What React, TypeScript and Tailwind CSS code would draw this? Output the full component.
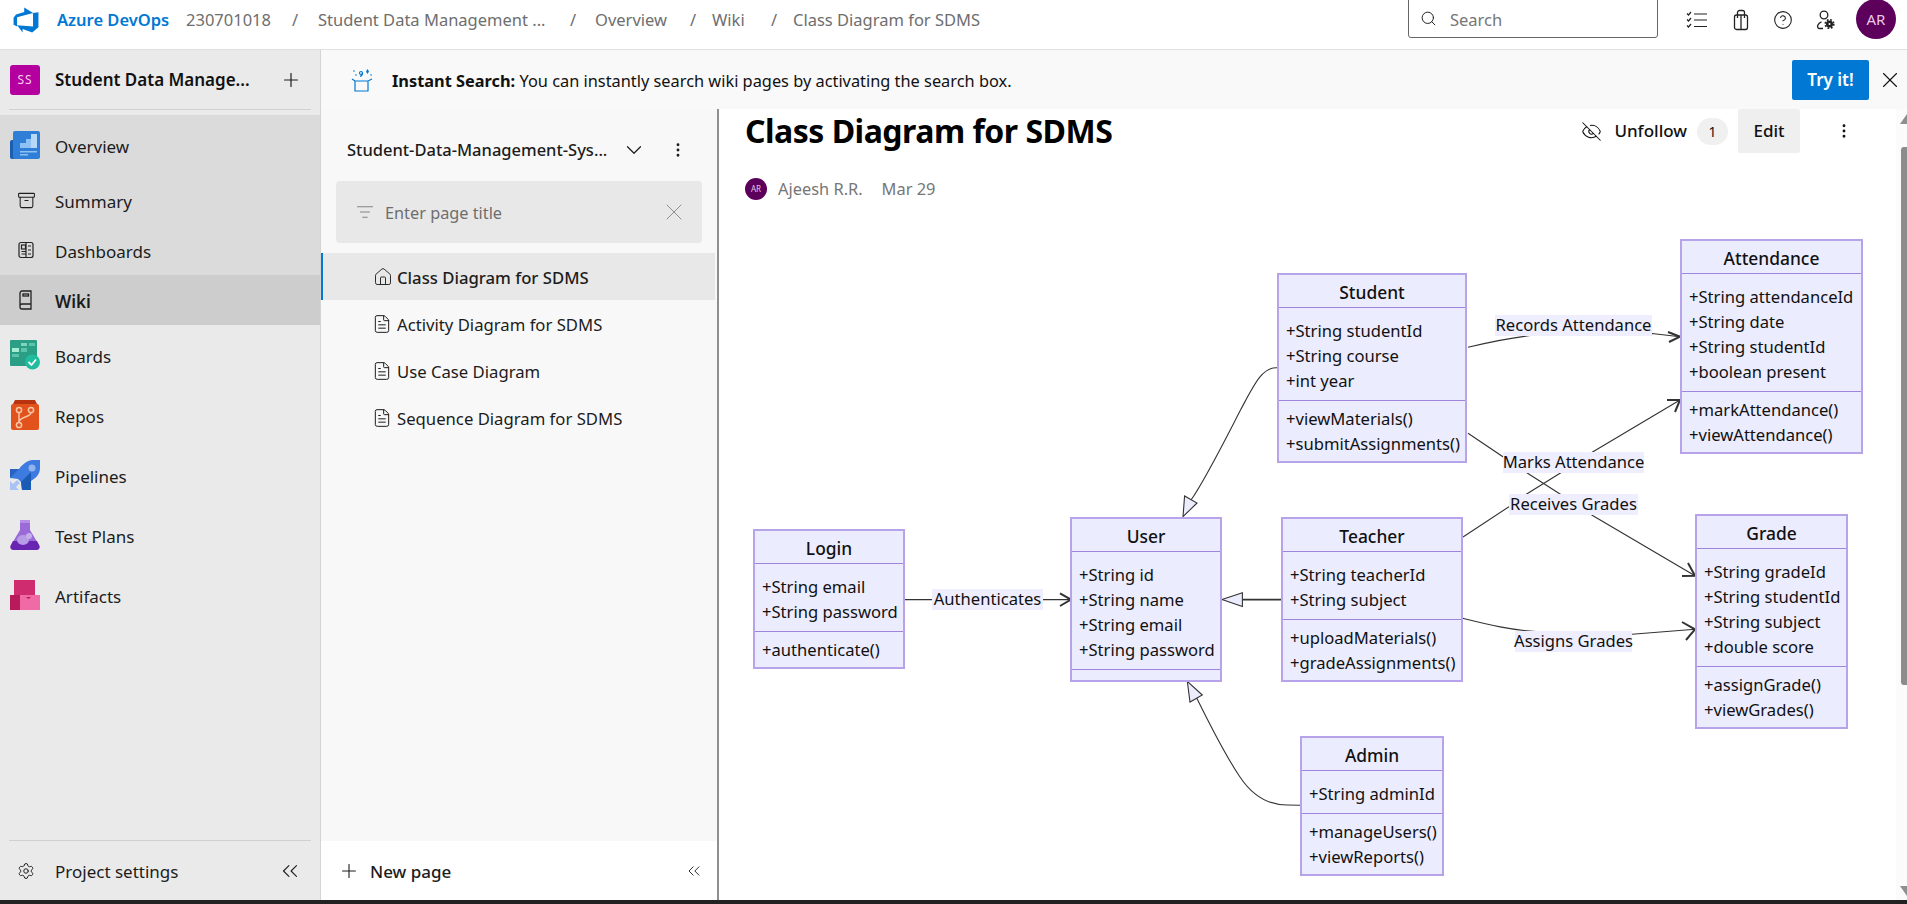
import { ChevronDown, ChevronsLeft, EllipsisVertical, FileText, House, ListFilter, Plus, Search, Settings, X, Archive, EyeOff, CircleHelp } from 'lucide-react';

function AzureLogo() {
  return (
    <svg width="28" height="28" viewBox="0 0 18 18" className="ml-[12px] shrink-0">
      <path fill="#0078d4" d="M17 4v9.74l-4 3.28-6.2-2.26V17l-3.51-4.59 10.23.8V4.44zm-3.41.49L7.85 1v2.9L2.58 5.45 1 7.49v4.63l2.26 1V7.18z" />
    </svg>
  );
}

function OverviewIcon() {
  return (
    <svg width="30" height="28" viewBox="0 0 30 28">
      <rect x="0" y="9" width="10" height="19" rx="2" fill="#1c5fb0" />
      <rect x="3" y="0" width="27" height="28" rx="2" fill="#2f7fd9" />
      <path d="M10 17v-5h6V8h5V3h6v14z" fill="#8fc2f2" />
      <path d="M21 3h6v14h-6z" fill="#b7d9f7" />
      <rect x="10" y="20" width="17" height="1.5" fill="#8fc2f2" />
      <rect x="10" y="23" width="8" height="1.5" fill="#8fc2f2" />
    </svg>
  );
}

function BoardsIcon() {
  return (
    <svg width="30" height="30" viewBox="0 0 30 30">
      <rect x="0" y="0" width="27" height="26" rx="1" fill="#2b9f86" />
      <rect x="2" y="8" width="7" height="4" fill="#a6ecd4" />
      <rect x="11" y="8" width="6" height="4" fill="#5cc4aa" />
      <rect x="19" y="3" width="6" height="3" fill="#5cc4aa" />
      <rect x="11" y="3" width="6" height="3" fill="#7fd4bd" />
      <rect x="2" y="14" width="7" height="3" fill="#5cc4aa" />
      <circle cx="22.5" cy="22" r="7.5" fill="#1fbd9e" />
      <path d="M18.5 22l3 3 4.5-5.5" fill="none" stroke="#fff" strokeWidth="1.8" />
    </svg>
  );
}

function ReposIcon() {
  return (
    <svg width="28" height="30" viewBox="0 0 28 30">
      <path d="M4 0h20l2 4H2z" fill="#b9340e" />
      <rect x="0" y="4" width="28" height="26" rx="2" fill="#e2521d" />
      <g fill="none" stroke="#f7c6a4" strokeWidth="1.5">
        <circle cx="8" cy="10" r="2.6" />
        <circle cx="20" cy="10" r="2.6" />
        <circle cx="8" cy="25" r="2.6" />
        <path d="M8 12.6v9.8M20 12.6c0 5-12 4-12 9.8" />
      </g>
    </svg>
  );
}

function PipelinesIcon() {
  return (
    <svg width="30" height="30" viewBox="0 0 30 30">
      <path d="M22 0h8v8c0 6-4 10-9 13v9h-9l-1-8-3-3-8-1V9h9C12 5 16 1 22 0z" fill="#3e7be0" />
      <path d="M21 21v9h-9l-1-8 10-10z" fill="#1a5cb5" />
      <path d="M0 9h9L0 18z" fill="#2a62c4" />
      <circle cx="22" cy="8" r="3.5" fill="#8fb4f0" />
      <path d="M0 30v-9l3 3 4-4 3 3-4 4 3 3z" fill="#a9c4f2" />
    </svg>
  );
}

function TestPlansIcon() {
  return (
    <svg width="30" height="30" viewBox="0 0 30 30">
      <path d="M10 0h10v10l9 15c1.500 2.500 0 5-3 5H4c-3 0-4.500-2.500-3-5l9-15z" fill="#9a6bd8" />
      <rect x="10" y="0" width="10" height="3" fill="#b48ee4" />
      <path d="M3 21h24l2 4c1.500 2.500 0 5-3 5H4c-3 0-4.500-2.500-3-5z" fill="#6a24b2" />
      <ellipse cx="13" cy="20" rx="6" ry="5" fill="#b79be6" />
      <circle cx="19" cy="16" r="3" fill="#c5aeeb" />
    </svg>
  );
}

function ArtifactsIcon() {
  return (
    <svg width="30" height="30" viewBox="0 0 30 30">
      <rect x="4" y="0" width="21" height="16" fill="#cf2c6f" />
      <rect x="0" y="15" width="12" height="15" fill="#b81a5a" />
      <rect x="10" y="15" width="20" height="15" fill="#f06ba5" />
      <path d="M16 17h5l-2.500 2z" fill="#b81a5a" />
    </svg>
  );
}

function DashboardIcon() {
  return (
    <svg width="18" height="18" viewBox="0 0 18 18" fill="none" stroke="#222" strokeWidth="1.2">
      <rect x="2" y="1.500" width="14" height="15" rx="2" />
      <rect x="4.500" y="4" width="4" height="4" />
      <path d="M4.500 10.500h4M4.500 13h4M9 1.500v15M11 5h3M11 9h3M11 13h3" />
    </svg>
  );
}

function WikiIcon() {
  return (
    <svg width="18" height="22" viewBox="0 0 18 22" fill="none" stroke="#222" strokeWidth="1.3">
      <path d="M3 18V4a2 2 0 0 1 2-2h9v18H5a2 2 0 0 1-2-2zM3 17a2 2 0 0 1 2-2h9" />
      <rect x="6" y="5" width="5.500" height="2" />
    </svg>
  );
}

function ChecklistIcon() {
  return (
    <svg width="22" height="18" viewBox="0 0 22 18" fill="none" stroke="#222" strokeWidth="1.200">
      <path d="M1 2.500l1.500 1.500L5 1M1 8.500l1.500 1.500L5 7M1 14.500l1.500 1.500L5 13" />
      <path d="M8 3h13M8 9h13M8 15.500h13" />
    </svg>
  );
}

function BagIcon() {
  return (
    <svg width="16" height="22" viewBox="0 0 16 22" fill="none" stroke="#222" strokeWidth="1.3">
      <rect x="1.500" y="6" width="13" height="14.500" rx="2" />
      <path d="M4.500 9V3.500a2 2 0 0 1 2-2h3a2 2 0 0 1 2 2V9M8 6v14" />
    </svg>
  );
}

function PersonGearIcon() {
  return (
    <svg width="19" height="20" viewBox="0 0 19 20" fill="none" stroke="#222" strokeWidth="1.300">
      <circle cx="8" cy="5" r="3.800" />
      <path d="M7 18.500H3.500c-1.500 0-2.300-1.500-1.800-3 .7-2 2-3.200 3.800-3.700" />
      <circle cx="13.500" cy="14" r="2.800" fill="#222" stroke="#222" strokeWidth="1.500" />
      <circle cx="13.500" cy="14" r="4.300" stroke="#222" strokeWidth="1.600" strokeDasharray="1.800 1.600" />
      <circle cx="13.500" cy="14" r="1" fill="#fff" stroke="none" />
    </svg>
  );
}

function InstantSearchIcon() {
  return (
    <svg width="22" height="24" viewBox="0 0 22 24" fill="none" stroke="#0078d4" strokeWidth="1.200">
      <path d="M4 13v10h13V13M1 11l3 2h13l4-2" />
      <circle cx="10" cy="5" r="1.500" />
      <path d="M11.500 5c0 2-1 3-2.500 3.500" />
      <path d="M16.500 1l1.500 2.500-1.500 2.500-1.500-2.500z" fill="#0078d4" stroke="none" />
      <circle cx="3" cy="3" r="0.800" fill="#0078d4" stroke="none" />
      <circle cx="5" cy="7" r="0.800" fill="#0078d4" stroke="none" />
      <circle cx="20" cy="7" r="0.800" fill="#0078d4" stroke="none" />
    </svg>
  );
}

const groupedNav = [
  { label: 'Overview', icon: <OverviewIcon />, row: 'h-[60px] pl-[10px]', gap: 'ml-[15px]' },
  { label: 'Summary', icon: <Archive size={19} strokeWidth={1.3} />, row: 'h-[50px] pl-[17px]', gap: 'ml-[19px]' },
  { label: 'Dashboards', icon: <DashboardIcon />, row: 'h-[50px] pl-[17px]', gap: 'ml-[20px]' },
  { label: 'Wiki', icon: <WikiIcon />, row: 'h-[50px] pl-[17px] bg-[#cdcdcd] font-semibold', gap: 'ml-[20px]' },
];

const otherNav = [
  { label: 'Boards', icon: <BoardsIcon />, row: 'pl-[10px]', gap: 'ml-[15px]' },
  { label: 'Repos', icon: <ReposIcon />, row: 'pl-[11px]', gap: 'ml-[16px]' },
  { label: 'Pipelines', icon: <PipelinesIcon />, row: 'pl-[10px]', gap: 'ml-[15px]' },
  { label: 'Test Plans', icon: <TestPlansIcon />, row: 'pl-[10px]', gap: 'ml-[15px]' },
  { label: 'Artifacts', icon: <ArtifactsIcon />, row: 'pl-[10px]', gap: 'ml-[15px]' },
];

function Sidebar() {
  return (
    <aside className="w-[321px] shrink-0 flex flex-col bg-[#eaeaea] border-r border-[#d4d4d4] text-[17px] text-[#1c1c1c]">
      <div className="h-[59px] flex items-center pl-[10px]">
        <div className="w-[30px] h-[30px] rounded-[3px] bg-[#b4009e] flex items-center justify-center text-[12px] tracking-[1px] text-[#f5d0ee]">SS</div>
        <span className="ml-[15px] w-[200px] whitespace-nowrap text-[17px] font-semibold text-[#111]">Student Data Manage...</span>
        <Plus size={22} strokeWidth={1.3} className="ml-[25px]" />
      </div>
      <div className="h-px mx-[9px] bg-[#d0d0d0]" />
      <div className="h-[5px]" />
      <nav className="bg-[#dbdbdb]">
        {groupedNav.map((item) => (
          <div key={item.label} className={`flex items-center ${item.row}`}>
            {item.icon}
            <span className={`${item.gap} pt-[4px]`}>{item.label}</span>
          </div>
        ))}
      </nav>
      <nav>
        {otherNav.map((item) => (
          <div key={item.label} className={`flex items-center h-[60px] ${item.row}`}>
            {item.icon}
            <span className={`${item.gap} pt-[4px]`}>{item.label}</span>
          </div>
        ))}
      </nav>
      <div className="mt-auto h-px mx-[9px] bg-[#d0d0d0]" />
      <div className="h-[59px] flex items-center pl-[17px] pr-[17px]">
        <Settings size={18} strokeWidth={1.3} />
        <span className="ml-[20px] pt-[2px]">Project settings</span>
        <ChevronsLeft size={26} strokeWidth={1} className="ml-auto" />
      </div>
    </aside>
  );
}

const pages = [
  { title: 'Activity Diagram for SDMS' },
  { title: 'Use Case Diagram' },
  { title: 'Sequence Diagram for SDMS' },
];

function WikiTree() {
  return (
    <div className="w-[398px] shrink-0 flex flex-col bg-[#f8f8f8] border-r-2 border-[#8f8f8f] text-[16.7px] text-[#1c1c1c]">
      <div className="h-[72px] pt-[10px] flex items-center pl-[26px]">
        <span className="w-[270px] whitespace-nowrap font-medium text-[16.5px]">Student-Data-Management-Sys...</span>
        <ChevronDown size={26} strokeWidth={1.1} className="ml-[4px]" />
        <EllipsisVertical size={18} strokeWidth={1.8} className="ml-[22px]" />
      </div>
      <div className="mx-[15px] h-[62px] w-[366px] rounded-[4px] bg-[#e8e8e8] flex items-center pl-[20px] pr-[14px] text-[#6e6e6e] text-[16.3px]">
        <ListFilter size={18} strokeWidth={1.1} />
        <span className="ml-[11px] pt-[2px]">Enter page title</span>
        <X size={28} strokeWidth={0.8} className="ml-auto text-[#888]" />
      </div>
      <div className="mt-[10px] h-[47px] mr-[2px] flex items-center pl-[50px] bg-[#e8e8e8] border-l-2 border-[#0078d4] font-medium">
        <House size={20} strokeWidth={1.1} />
        <span className="ml-[4px] pt-[2px]">Class Diagram for SDMS</span>
      </div>
      {pages.map((page) => (
        <div key={page.title} className="h-[47px] flex items-center pl-[51px]">
          <FileText size={20} strokeWidth={1.2} />
          <span className="ml-[5px] pt-[2px]">{page.title}</span>
        </div>
      ))}
      <div className="mt-auto h-[59px] bg-white flex items-center pl-[17px] pr-[13px]">
        <Plus size={22} strokeWidth={1.2} />
        <span className="ml-[10px] pt-[2px] font-medium text-[17px]">New page</span>
        <ChevronsLeft size={20} strokeWidth={1.1} className="ml-auto" />
      </div>
    </div>
  );
}

const umlClasses = [
  { name: 'Login', pos: 'left-[34px] top-[319px] w-[152px]', attrs: ['+String email', '+String password'], methods: ['+authenticate()'] },
  { name: 'User', pos: 'left-[351px] top-[307px] w-[152px]', attrs: ['+String id', '+String name', '+String email', '+String password'], methods: [] },
  { name: 'Student', pos: 'left-[558px] top-[63px] w-[190px]', attrs: ['+String studentId', '+String course', '+int year'], methods: ['+viewMaterials()', '+submitAssignments()'] },
  { name: 'Attendance', pos: 'left-[961px] top-[29px] w-[183px]', attrs: ['+String attendanceId', '+String date', '+String studentId', '+boolean present'], methods: ['+markAttendance()', '+viewAttendance()'] },
  { name: 'Teacher', pos: 'left-[562px] top-[307px] w-[182px]', attrs: ['+String teacherId', '+String subject'], methods: ['+uploadMaterials()', '+gradeAssignments()'] },
  { name: 'Grade', pos: 'left-[976px] top-[304px] w-[153px]', attrs: ['+String gradeId', '+String studentId', '+String subject', '+double score'], methods: ['+assignGrade()', '+viewGrades()'] },
  { name: 'Admin', pos: 'left-[581px] top-[526px] w-[144px]', attrs: ['+String adminId'], methods: ['+manageUsers()', '+viewReports()'] },
];

const edgeLabels = [
  { text: 'Authenticates', pos: 'left-[213px] top-[379px] w-[111px]' },
  { text: 'Records Attendance', pos: 'left-[776px] top-[105px] w-[157px]' },
  { text: 'Marks Attendance', pos: 'left-[784px] top-[242px] w-[141px]' },
  { text: 'Receives Grades', pos: 'left-[790px] top-[284px] w-[129px]' },
  { text: 'Assigns Grades', pos: 'left-[796px] top-[421px] w-[117px]' },
];

function UmlBox({ name, pos, attrs, methods }: { name: string; pos: string; attrs: string[]; methods: string[] }) {
  return (
    <div className={`absolute ${pos} bg-[#ececff] border-2 border-[#b7a3ea] text-[16.6px] leading-[25px] text-[#111]`}>
      <div className="h-[32px] pt-[3px] flex items-center justify-center font-medium text-[17.4px]">{name}</div>
      <div className="border-t border-[#9f85de] pl-[7px] pt-[10px] pb-[7px] whitespace-nowrap">
        {attrs.map((a) => <div key={a}>{a}</div>)}
      </div>
      <div className="border-t border-[#9f85de] pl-[7px] pt-[5px] pb-[5px] whitespace-nowrap">
        {methods.map((m) => <div key={m}>{m}</div>)}
      </div>
    </div>
  );
}

function ClassDiagram() {
  return (
    <div className="relative h-[690px]">
      <svg className="absolute left-0 top-0" width="1177" height="690" viewBox="719 210 1177 690" fill="none" stroke="#333" strokeWidth="1.1">
        <path d="M905 599.6H1071" />
        <path d="M1060 593.300L1071 599.600L1060 606" strokeWidth="2" />
        <path d="M1277 367.700C1262 367 1254 385 1240.500 410C1225 440 1205 480 1191 500" />
        <path d="M1183 516.700L1184.600 496L1197 503Z" fill="#ececff" />
        <path d="M1281.800 599.600H1242.400" strokeWidth="1.600" />
        <path d="M1222 599.600L1242.400 592.700V606.500Z" fill="#ececff" />
        <path d="M1300 805.300L1287 805C1265 805 1250 792 1240 777C1225 755 1210 725 1196.700 698" />
        <path d="M1187.300 681.300L1190 702L1202.300 695Z" fill="#ececff" />
        <path d="M1468 347.300C1490 342 1515 337 1536 335L1652 333.500L1680 336.700" />
        <path d="M1668 332L1680 336.700L1669 342" strokeWidth="2" />
        <path d="M1468 433.300L1527.600 473.300L1560 494L1593 515.700L1695 575.700" />
        <path d="M1682 576L1695 575.700L1688 563" strokeWidth="2" />
        <path d="M1463 537L1509 506.700L1526.700 494L1560 473.300L1593 451.700L1680 400" />
        <path d="M1667 400L1680 400L1675 412" strokeWidth="2" />
        <path d="M1463 618.300C1490 625 1510 630 1536 631.500L1632 634.300L1695 629.300" />
        <path d="M1682 622L1695 629.300L1686 640" strokeWidth="2" />
      </svg>
      {umlClasses.map((c) => <UmlBox key={c.name} {...c} />)}
      {edgeLabels.map((l) => (
        <div key={l.text} className={`absolute ${l.pos} h-[21px] bg-[#eeeeff] flex items-center justify-center text-[16.6px] text-[#111] whitespace-nowrap`}>{l.text}</div>
      ))}
    </div>
  );
}

function WikiPage() {
  return (
    <div className="flex-1 flex bg-white min-w-0">
      <div className="flex-1 min-w-0">
        <div className="h-[44px] flex items-center pl-[26px] text-[#111]">
          <h1 className="text-[32px] font-bold text-black tracking-[-0.5px] whitespace-nowrap">Class Diagram for SDMS</h1>
          <EyeOff size={21} strokeWidth={1.2} className="ml-auto" />
          <span className="ml-[12px] text-[17px] font-medium">Unfollow</span>
          <span className="ml-[10px] w-[31px] h-[27px] rounded-full bg-[#f0f0f0] flex items-center justify-center text-[14px]">1</span>
          <span className="ml-[10px] w-[62px] h-[44px] rounded-[2px] bg-[#efefef] flex items-center justify-center text-[17px] font-medium">Edit</span>
          <EllipsisVertical size={18} strokeWidth={1.8} className="ml-[35px] mr-[43px]" />
        </div>
        <div className="h-[57px] flex items-center pl-[26px] pt-[15px] text-[#767676] text-[16.4px]">
          <span className="w-[22px] h-[22px] rounded-full bg-[#5c005c] text-[#e8c8e8] text-[8px] flex items-center justify-center">AR</span>
          <span className="ml-[11px]">Ajeesh R.R.</span>
          <span className="ml-[19px]">Mar 29</span>
        </div>
        <ClassDiagram />
      </div>
      <div className="w-[11px] shrink-0 bg-[#fbfbfb] flex flex-col items-end">
        <svg width="7" height="10" viewBox="0 0 7 10" className="mt-[5px]"><path d="M7 0v10H0z" fill="#8f8f8f" /></svg>
        <div className="mt-[23px] w-[6px] h-[538px] rounded-l-[3px] bg-[#8c8c8c]" />
        <svg width="7" height="10" viewBox="0 0 7 10" className="mt-auto mb-[4px]"><path d="M7 10V0H0z" fill="#8f8f8f" /></svg>
      </div>
    </div>
  );
}

export default function App() {
  return (
    <div className="w-[1907px] h-[904px] overflow-hidden flex flex-col bg-white font-['Noto_Sans',sans-serif]">
      <header className="h-[50px] shrink-0 flex items-center pb-[9px] border-b border-[#e0e0e0] text-[16.5px] text-[#6e6e6e]">
        <AzureLogo />
        <span className="ml-[17px] w-[129px] whitespace-nowrap font-semibold text-[#0078d4]">Azure DevOps</span>
        <span className="w-[106px] whitespace-nowrap">230701018</span>
        <span className="w-[26px]">/</span>
        <span className="w-[252px] whitespace-nowrap">Student Data Management ...</span>
        <span className="w-[25px]">/</span>
        <span className="w-[95px]">Overview</span>
        <span className="w-[22px]">/</span>
        <span className="w-[59px]">Wiki</span>
        <span className="w-[22px]">/</span>
        <span className="whitespace-nowrap">Class Diagram for SDMS</span>
        <div className="ml-auto self-start w-[250px] h-[39px] -mt-px border border-[#666] rounded-b-[3px] flex items-center pl-[11px]">
          <Search size={17} strokeWidth={1.4} className="text-[#222]" />
          <span className="ml-[13px] pt-[3px] text-[#767676]">Search</span>
        </div>
        <span className="ml-[28px]"><ChecklistIcon /></span>
        <span className="ml-[25px]"><BagIcon /></span>
        <CircleHelp size={20} strokeWidth={1.3} className="ml-[24px] text-[#222]" />
        <span className="ml-[23px]"><PersonGearIcon /></span>
        <div className="ml-[21px] mr-[11px] self-start w-[40px] h-[40px] -mt-px rounded-full bg-[#5c005c] flex items-center justify-center text-[#e8c8e8] text-[15px]">AR</div>
      </header>
      <div className="flex-1 flex min-h-0">
        <Sidebar />
        <div className="flex-1 flex flex-col min-w-0">
          <div className="h-[59px] shrink-0 flex items-center bg-[#f9f9f9] pl-[30px] text-[16.35px] text-[#111]">
            <InstantSearchIcon />
            <p className="ml-[19px] pt-[4px]"><span className="font-bold">Instant Search:</span> You can instantly search wiki pages by activating the search box.</p>
            <button className="ml-auto w-[77px] h-[40px] rounded-[2px] bg-[#0078d4] text-white font-semibold text-[17px]">Try it!</button>
            <X size={26} strokeWidth={1} className="ml-[8px] mr-[4px]" />
          </div>
          <div className="flex-1 flex min-h-0">
            <WikiTree />
            <WikiPage />
          </div>
        </div>
      </div>
      <div className="h-[4px] shrink-0 bg-[#222]" />
    </div>
  );
}
